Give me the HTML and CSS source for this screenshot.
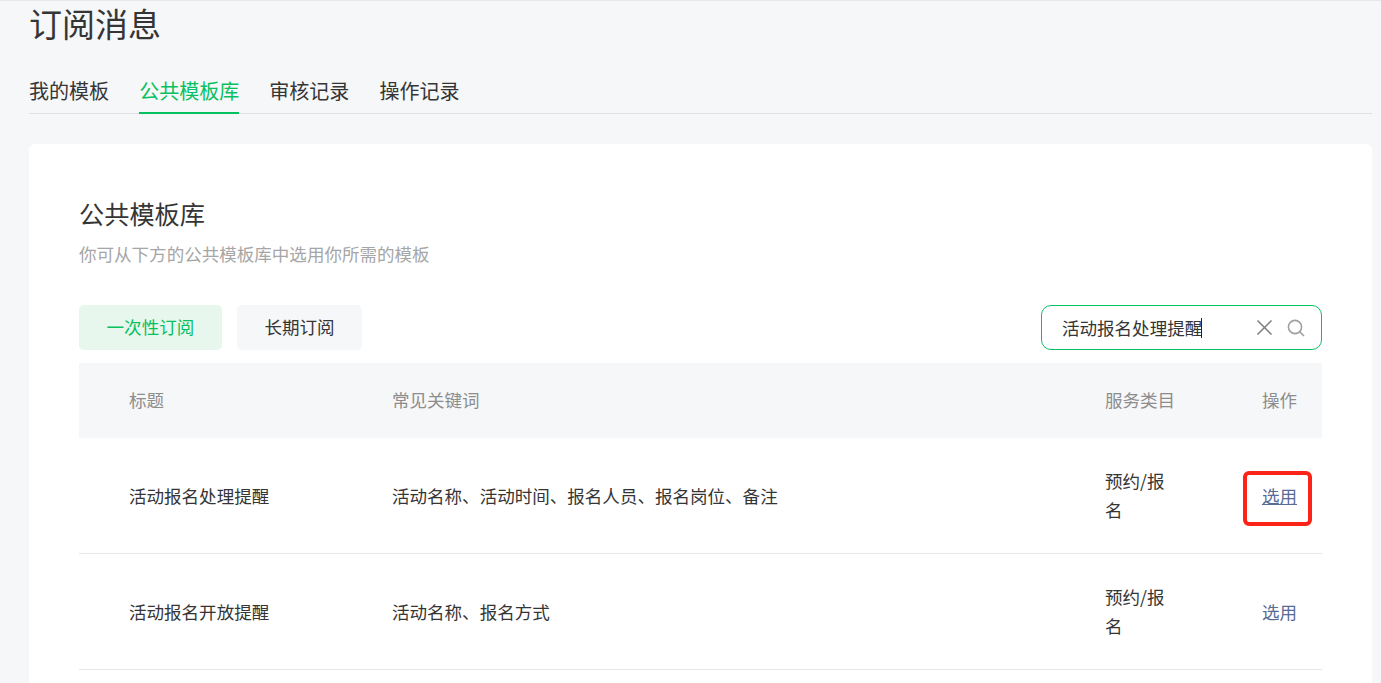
FILE: index.html
```html
<!DOCTYPE html>
<html lang="zh-CN">
<head>
	<meta charset="UTF-8">
	<title>订阅消息</title>
	<link rel="stylesheet" href="styles.css">
</head>
<body>
	<div class="page">
		<h1 class="page-title">订阅消息</h1>
		<ul class="tabs">
			<li>我的模板</li>
			<li class="active">公共模板库</li>
			<li>审核记录</li>
			<li>操作记录</li>
		</ul>
		<div class="card">
			<h2 class="card-title">公共模板库</h2>
			<p class="card-desc">你可从下方的公共模板库中选用你所需的模板</p>
			<div class="toolbar">
				<div class="switch">
					<a class="switch-btn on">一次性订阅</a>
					<a class="switch-btn">长期订阅</a>
				</div>
				<div class="search">
					<span class="search-text">活动报名处理提醒</span>
					<span class="caret"></span>
					<svg class="icon-clear" width="17" height="17" viewBox="0 0 17 17"><path d="M1.5 1.5l14 14M15.5 1.5l-14 14" stroke="#7d7d7d" stroke-width="1.5" fill="none"/></svg>
					<svg class="icon-search" width="18" height="18" viewBox="0 0 18 18"><circle cx="8" cy="8" r="6.6" stroke="#a0a0a0" stroke-width="1.6" fill="none"/><path d="M12.6 12.6l4.4 4.4" stroke="#a0a0a0" stroke-width="1.6" fill="none"/></svg>
				</div>
			</div>
			<table class="list">
				<thead>
					<tr>
						<th class="col-title">标题</th>
						<th class="col-key">常见关键词</th>
						<th class="col-cat">服务类目</th>
						<th class="col-op">操作</th>
					</tr>
				</thead>
				<tbody>
					<tr>
						<td class="col-title">活动报名处理提醒</td>
						<td class="col-key">活动名称、活动时间、报名人员、报名岗位、备注</td>
						<td class="col-cat">预约/报名</td>
						<td class="col-op"><a class="pick hover">选用<span class="mark"></span></a></td>
					</tr>
					<tr>
						<td class="col-title">活动报名开放提醒</td>
						<td class="col-key">活动名称、报名方式</td>
						<td class="col-cat">预约/报名</td>
						<td class="col-op"><a class="pick">选用</a></td>
					</tr>
				</tbody>
			</table>
		</div>
	</div>
</body>
</html>
```

FILE: styles.css
```css
*{
	margin: 0;
	padding: 0;
	box-sizing: border-box;
}
html,body{
	height: 100%;
	overflow: hidden;
}
body{
	background-color: #f6f7f9;
	border-top: 1px solid #e7e8eb;
	font-family: "Noto Sans CJK SC", "Liberation Sans", sans-serif;
	color: #353535;
}
.page{
	padding: 0 9px 0 29px;
}
.page-title{
	font-size: 33px;
	font-weight: 400;
	line-height: 44px;
	color: #353535;
}
.tabs{
	display: flex;
	gap: 30px;
	margin-top: 23px;
	border-bottom: 1px solid #e0e1e4;
	list-style: none;
}
.tabs li{
	font-size: 20.05px;
	line-height: 45px;
	height: 45px;
}
.tabs li.active{
	color: #07c160;
	border-bottom: 2px solid #07c160;
	margin-bottom: -1px;
	height: 46px;
}
.card{
	margin-top: 30px;
	padding: 50px;
	background-color: #fff;
	border-radius: 6px;
}
.card-title{
	font-size: 25.2px;
	font-weight: 400;
	line-height: 38px;
}
.card-desc{
	margin-top: 7px;
	font-size: 17.55px;
	line-height: 30px;
	color: #a6a6a6;
}
.toolbar{
	display: flex;
	justify-content: space-between;
	margin-top: 36px;
}
.switch{
	display: flex;
	gap: 15px;
}
.switch-btn{
	display: block;
	height: 45px;
	padding: 0 27.6px;
	background-color: #f6f7f9;
	border-radius: 5px;
	font-size: 17.55px;
	line-height: 44px;
}
.switch-btn.on{
	background-color: #e8f7ee;
	color: #07c160;
}
.search{
	display: flex;
	align-items: center;
	width: 281px;
	height: 45px;
	padding-left: 20px;
	border: 1px solid #07c160;
	border-radius: 10px;
	font-size: 17.55px;
}
.caret{
	width: 1px;
	height: 20px;
	margin-left: -1px;
	background-color: #222;
}
.icon-clear{
	margin-left: 54px;
}
.icon-search{
	margin-left: 14px;
}
.list{
	width: 100%;
	margin-top: 13px;
	border-collapse: separate;
	border-spacing: 0;
	table-layout: fixed;
	font-size: 17.55px;
	line-height: 29px;
}
.list th{
	height: 75px;
	padding-bottom: 2px;
	background-color: #f6f7f9;
	font-weight: 400;
	text-align: left;
	color: #8d8d8d;
}
.list td{
	height: 116px;
	padding-bottom: 1px;
	border-bottom: 1px solid #e7e7e7;
}
.col-title{
	width: 313px;
	padding-left: 50px;
}
.col-key{
	width: 713px;
}
.col-cat{
	width: 100px;
	padding-right: 28px;
}
.list td.col-cat{
	padding-bottom: 2px;
}
.list .col-op{
	padding-right: 25px;
	text-align: right;
}
.list td.col-op{
	padding-bottom: 0;
}
.pick{
	position: relative;
	display: inline-block;
	color: #576b95;
}
.pick.hover{
	text-decoration: underline;
}
.mark{
	position: absolute;
	left: -19px;
	top: -10px;
	width: 69px;
	height: 55px;
	border: 4px solid #fb2419;
	border-radius: 6px;
}
```
